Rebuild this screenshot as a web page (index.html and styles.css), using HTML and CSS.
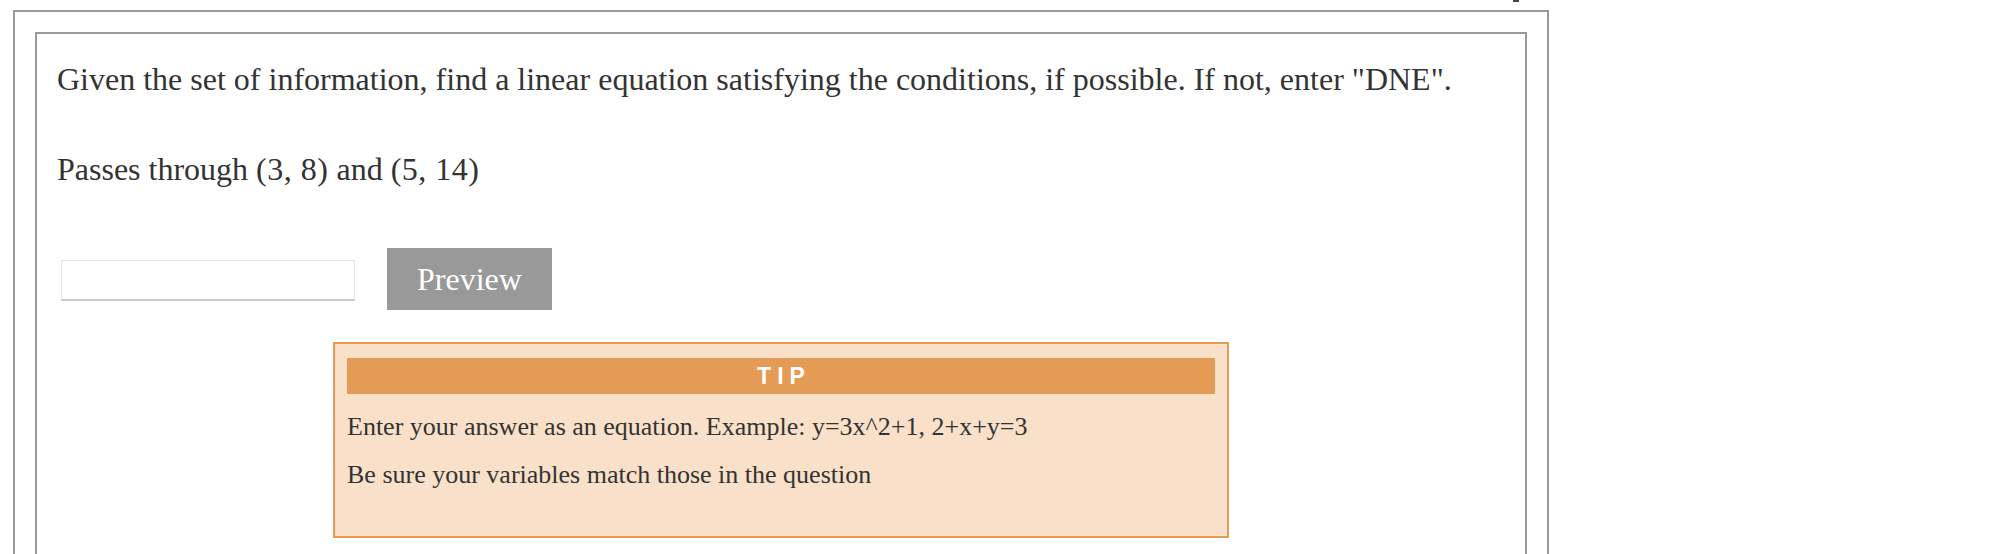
FILE: index.html
```html
<!DOCTYPE html>
<html lang="en">
<head>
<meta charset="UTF-8">
<meta name="viewport" content="width=device-width, initial-scale=1.0">
<title>Question</title>
<link rel="stylesheet" href="styles.css">
</head>
<body>

<div class="topbar"><span class="mark"></span></div>

<div class="frame">
  <div class="question">
    <p class="prompt">Given the set of information, find a linear equation satisfying the conditions, if possible. If not, enter "DNE".</p>
    <p class="prompt">Passes through <span class="math">(3, 8)</span> and <span class="math">(5, 14)</span></p>

    <!-- Answer row -->
    <div class="answer-row">
      <input type="text" class="answer" aria-label="Answer">
      <button class="preview">Preview</button>
    </div>

    <!-- Tip box -->
    <div class="tip">
      <div class="tip-title">TIP</div>
      <p>Enter your answer as an equation. Example: y=3x^2+1, 2+x+y=3</p>
      <p>Be sure your variables match those in the question</p>
    </div>
  </div>
</div>

</body>
</html>
```

FILE: styles.css
```css
body { margin: 0; font-family: "Liberation Serif", "Times New Roman", serif; color: #333; background: #fff; }
.topbar { height: 10px; }
.mark { display: block; width: 6px; height: 2px; margin-left: 1513px; background: #444; }
.frame { width: 1536px; box-sizing: border-box; margin-left: 13px; border: 2px solid #999; border-bottom: 0; padding: 20px 20px 0; }
.question { border: 2px solid #999; border-bottom: 0; padding: 25px 20px 80px; }
.prompt { margin: 0 0 50px; font-size: 32px; line-height: 40px; }
.math { letter-spacing: 0.5px; }
.answer-row { display: flex; align-items: flex-start; margin-top: 59px; }
.answer { box-sizing: border-box; width: 294px; height: 41px; margin: 12px 0 0 4px; border: 1px solid #e6e6e6; border-bottom: 2px solid #c8c8c8; background: #fff; outline: none; font-size: 26px; }
.preview { box-sizing: border-box; height: 62px; margin-left: 32px; padding: 0 30px; border: 0; background: #999; color: #fff; font-family: "Liberation Serif", "Times New Roman", serif; font-size: 32px; line-height: 62px; }
.tip { box-sizing: border-box; width: 896px; margin: 32px auto 0; padding: 14px 12px 28px; border: 2px solid #e39b56; background: #f9e0c9; }
.tip-title { height: 36px; margin-bottom: 3px; padding-left: 6px; background: #e39b56; color: #fff; font-family: "Liberation Sans", Arial, sans-serif; font-weight: bold; font-size: 23px; letter-spacing: 6px; line-height: 36px; text-align: center; }
.tip p { margin: 18px 0; font-size: 26px; line-height: 30px; color: #333; }
```
